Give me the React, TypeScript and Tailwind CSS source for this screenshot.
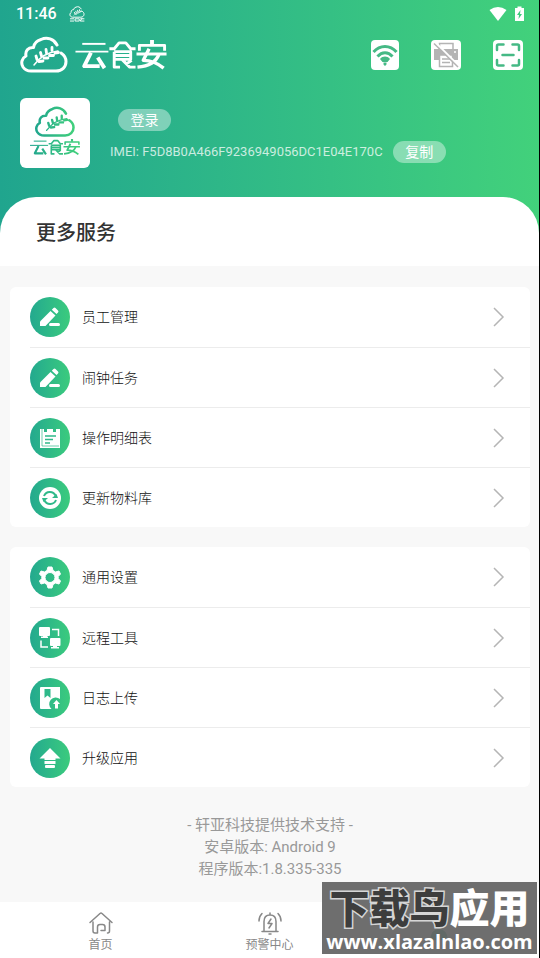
import type { ReactNode } from 'react';

const FONT = "font-[Roboto,'Noto_Sans_CJK_SC',sans-serif]";

function Cloud({ stroke, id }: { stroke: string; id?: string }) {
  return (
    <g fill="none" stroke={id ? `url(#${id})` : stroke} strokeLinecap="round" strokeLinejoin="round">
      <path
        strokeWidth="3"
        d="M37 9C34 3 27 0.500 21 3.500C16 5 14 8 13.500 11.500C8 11 5 15 6 20C2 22 0.500 27 3 31C5 34 8 35 11 35H36C42 35 46 31 46 25.500C46 22 44 19 41 17"
      />
      <path strokeWidth="1.500" d="M14 29C20 21 28 16 38 15" />
      <path
        strokeWidth="2.800"
        d="M17 23.500L16 20M21.500 20L20.500 16.500M26.500 17L26 13.500M32 14.500L32 11.500M19 25.500L23 25M24 22L28 22M29.500 19.500L33.500 19.500M35 17L38.500 16.500"
      />
    </g>
  );
}

function Mark() {
  return (
    <svg className="h-[38px] w-[48px]" viewBox="0 0 48 38" aria-hidden="true">
      <Cloud stroke="#fff" />
    </svg>
  );
}

function Wordmark({ gradient = false }: { gradient?: boolean }) {
  const color = gradient ? 'url(#word)' : '#fff';
  return (
    <svg className={gradient ? 'h-[17px] w-[52px]' : 'h-[31px] w-[92px]'} viewBox="0 0 94 32" role="img" aria-label="云食安">
      {gradient && (
        <defs>
          <linearGradient id="word" gradientUnits="userSpaceOnUse" x1="0" y1="0" x2="94" y2="0">
            <stop offset="0" stopColor="#20a58e" />
            <stop offset="1" stopColor="#42d17b" />
          </linearGradient>
        </defs>
      )}
      <g fill="none" stroke={color} strokeWidth="3" strokeLinejoin="round">
        <path strokeWidth="2" d="M7 4H31" />
        <path strokeWidth="2" d="M0 12H34" />
        <path strokeWidth="4" d="M16 13L9 27H25M23 18L30 29" />
        <path d="M35 9H40L45 3H52L57 9H62M40 12V28H46M40 12H57V20H40M40 16H57M48 20L56 28H62M58 21L52 25" />
        <path strokeWidth="4" d="M79 0V5" />
        <path d="M66 11V5.500H92V11M63 14.500H94" />
        <path strokeWidth="3.500" d="M76 9L70 21C79 21 85 24 91 29M86 15C83 23 75 27 64 28" />
      </g>
    </svg>
  );
}

function WifiIcon() {
  return (
    <svg viewBox="0 0 28 30" className="h-[30px] w-7" fill="none" stroke="#45b985" strokeWidth="3" aria-hidden="true">
      <path d="M2.500 12C9 4.500 19 4.500 25.500 12M6.500 16.500C11 11.500 17 11.500 21.500 16.500" />
      <path fill="#45b985" stroke="none" d="M9 19C12 15.800 16 15.800 19 19L16.500 22H11.500ZM12.500 22.500H15.500V24.500L14 26L12.500 24.500Z" />
    </svg>
  );
}

function PrinterIcon() {
  return (
    <svg viewBox="0 0 30 30" className="size-[30px]" aria-hidden="true">
      <path fill="none" stroke="#b4b4b4" strokeWidth="1.500" d="M8.500 9V3.500H22V9" />
      <path fill="#b4b4b4" d="M3 9H27V20H22V15H8V20H3Z" />
      <path fill="#fff" stroke="#b4b4b4" strokeWidth="1.500" d="M8.500 15H21.500V26.500H8.500Z" />
      <path stroke="#b4b4b4" strokeWidth="1.500" d="M11 19H19M11 22.500H19" />
      <path stroke="#fff" strokeWidth="2" d="M4.500 2.500L28.500 26.500" />
      <path stroke="#b4b4b4" strokeWidth="1.500" d="M3 3.500L27 27" />
      <circle cx="24" cy="12" r="1" fill="#fff" />
    </svg>
  );
}

function ScanIcon() {
  return (
    <svg viewBox="0 0 30 30" className="size-[30px]" fill="none" stroke="#45b985" strokeWidth="2.500" strokeLinecap="round" aria-hidden="true">
      <path d="M4 10V6Q4 4.500 5.500 4.500H10.500M19.500 4.500H24.500Q26 4.500 26 6V10M26 20V24Q26 25.500 24.500 25.500H19.500M10.500 25.500H5.500Q4 25.500 4 24V20M9.500 15H20.500" />
    </svg>
  );
}

function PencilIcon() {
  return (
    <>
      <path d="M10 29V24.500L20.500 14L25.500 18.500L15.500 29Z" />
      <path d="M21.800 12.700L23.500 11Q24.500 10 25.500 11L28 13.500Q29 14.500 28 15.500L26.500 17Z" />
      <rect x="19" y="26" width="11" height="3" rx="1.500" />
    </>
  );
}

function NotesIcon() {
  return (
    <>
      <path d="M10 11H14V14H17V11H23V14H26V11H30V30H10Z" />
      <path fill="none" stroke="#2fb98a" strokeWidth="0.700" d="M12 11V28H29" />
      <path stroke="#2fb98a" strokeWidth="1.500" d="M15 18H26M15 21.500H23M15 25H20" />
    </>
  );
}

function RefreshIcon() {
  return (
    <>
      <circle cx="20" cy="20" r="11" />
      <path fill="none" stroke="#2fb98a" strokeWidth="2" d="M14 18A6.300 6.300 0 0 1 25.500 17.500M26 22A6.300 6.300 0 0 1 14.500 22.500" />
      <path fill="#2fb98a" d="M22 20H28L26.500 16ZM18 20H12L13.500 24Z" />
    </>
  );
}

function GearIcon() {
  return (
    <path
      fillRule="evenodd"
      stroke="#fff"
      strokeLinejoin="round"
      d="M18 10H22L23 13.500L25.500 15L29 14L30.500 17L28.200 19.500V21.500L30.500 24L29 27L25.500 26L23 27.500L22 31H18L17 27.500L14.500 26L11 27L9.500 24L11.800 21.500V19.500L9.500 17L11 14L14.500 15L17 13.500ZM20 15.500A5 5 0 1 0 20 25.500A5 5 0 1 0 20 15.500Z"
    />
  );
}

function RemoteIcon() {
  return (
    <>
      <rect x="9" y="9" width="11" height="9" rx="1" />
      <path d="M13 17H17V18.500H18V20H11V18.500H13Z" />
      <rect x="20" y="20" width="10.500" height="8" rx="1" />
      <path d="M23 27.500H27V29H29V30.500H21V29H23Z" />
      <path fill="none" stroke="#fff" strokeWidth="1.500" d="M22 11.500H28.500V18M11 22.500V29H18" />
    </>
  );
}

function LogIcon() {
  return (
    <>
      <path d="M11 9H30V21A6 6 0 0 0 21.500 31H11Q10 31 10 30V10Q10 9 11 9Z" />
      <path fill="#2fb98a" d="M14.500 11H20.500V20L17.500 17.500L14.500 20Z" />
      <path d="M26.500 22L30 26H28V30.500H25V26H23Z" />
    </>
  );
}

function UpgradeIcon() {
  return (
    <>
      <path d="M20 10L30.500 20.500H25.500V22H14.500V20.500H9.500Z" />
      <rect x="14.500" y="23" width="11" height="3" />
      <rect x="15" y="27" width="10" height="3" rx="1" />
    </>
  );
}

function Row({ icon, label, first = false }: { icon: ReactNode; label: string; first?: boolean }) {
  return (
    <li className="pl-5">
      <button className={`flex h-[60px] w-full items-center pr-5 text-left ${first ? '' : 'border-t border-[#ececec]'}`}>
        <span className="flex size-10 shrink-0 items-center justify-center rounded-full bg-linear-to-r from-[#23a98e] to-[#3bcb7d]">
          <svg viewBox="0 0 40 40" className="size-10" fill="#fff" aria-hidden="true">
            {icon}
          </svg>
        </span>
        <span className="ml-3 flex-1 text-sm font-light text-[#111]">{label}</span>
        <svg viewBox="0 0 20 20" className="size-5" fill="none" stroke="#b5b5b5" strokeWidth="1.500" aria-hidden="true">
          <path d="M4 1L13 10L4 19" />
        </svg>
      </button>
    </li>
  );
}

function Tab({ label, children }: { label: string; children: ReactNode }) {
  return (
    <a href="#" className="flex flex-1 flex-col items-center gap-[1px] pt-2 text-[#888]">
      <svg viewBox="0 0 26 26" className="size-[26px]" fill="none" stroke="currentColor" strokeWidth="1.500" strokeLinecap="round" strokeLinejoin="round" aria-hidden="true">
        {children}
      </svg>
      <span className="text-xs leading-4">{label}</span>
    </a>
  );
}

export default function App() {
  return (
    <div className={`flex min-h-screen flex-col border-r border-black bg-[#f8f8f8] ${FONT}`}>
      <header className="bg-linear-to-r from-[#20a58e] to-[#42d17b] text-white">
        <div className="flex h-7 items-center justify-between pr-[15px] pl-4">
          <div className="flex items-center gap-3">
            <span className="text-base font-medium">11:46</span>
            <svg viewBox="0 0 48 50" className="h-4 w-4" aria-hidden="true">
              <Cloud stroke="#fff" />
              <path stroke="#fff" strokeWidth="3" fill="none" d="M2 40H15M2 47H15M18 40H31V47H18ZM34 40H47M40 38L34 47H47" />
            </svg>
          </div>
          <div className="flex items-center gap-2">
            <svg viewBox="0 0 18 16" className="h-4 w-[18px]" fill="#fff" aria-hidden="true">
              <path d="M0.500 4Q9 -2 17.500 4L9 15Z" />
            </svg>
            <svg viewBox="0 0 9 16" className="h-4 w-[9px]" fill="#fff" aria-hidden="true">
              <path d="M2.500 0.500H6.500V2H9V15H0V2H2.500Z" />
              <path fill="#3ecb7c" d="M5.500 4L2 9H4L3.500 13L7 8H5Z" />
            </svg>
          </div>
        </div>

        <div className="flex h-[54px] items-center justify-between pr-4 pl-5">
          <h1 className="flex items-center gap-[7px]">
            <Mark />
            <Wordmark />
          </h1>
          <div className="flex items-center gap-8">
            <button aria-label="WiFi" className="rounded bg-white">
              <WifiIcon />
            </button>
            <button aria-label="打印机" className="rounded bg-white">
              <PrinterIcon />
            </button>
            <button aria-label="扫一扫" className="rounded bg-white">
              <ScanIcon />
            </button>
          </div>
        </div>

        <div className="flex gap-5 px-5 pt-4 pb-[29px]">
          <div className="flex size-[70px] shrink-0 flex-col items-center gap-[1px] rounded-md bg-white pt-2">
            <svg viewBox="0 0 48 38" className="h-8 w-11" aria-hidden="true">
              <defs>
                <linearGradient id="cloud" gradientUnits="userSpaceOnUse" x1="0" y1="0" x2="48" y2="0">
                  <stop offset="0" stopColor="#20a58e" />
                  <stop offset="1" stopColor="#42d17b" />
                </linearGradient>
              </defs>
              <Cloud stroke="#20a58e" id="cloud" />
            </svg>
            <Wordmark gradient />
          </div>
          <div className="flex flex-col items-start gap-[10px] pt-[11px]">
            <button className="ml-2 h-[22px] w-[53px] rounded-full bg-white/40 text-sm leading-[22px]">登录</button>
            <div className="flex items-center gap-[10px]">
              <span className="text-[13px] whitespace-nowrap text-white/75">IMEI: F5D8B0A466F9236949056DC1E04E170C</span>
              <button className="h-[22px] w-[53px] rounded-full bg-white/40 text-sm leading-[22px]">复制</button>
            </div>
          </div>
        </div>

        <div className="rounded-t-[36px] bg-white px-9 pt-5 pb-[17px]">
          <h2 className="text-xl leading-8 font-medium text-[#333]">更多服务</h2>
        </div>
      </header>

      <main className="flex flex-1 flex-col gap-5 pt-[21px] pr-[9px] pl-[10px]">
        <ul className="rounded-md bg-white">
          <Row icon={<PencilIcon />} label="员工管理" first />
          <Row icon={<PencilIcon />} label="闹钟任务" />
          <Row icon={<NotesIcon />} label="操作明细表" />
          <Row icon={<RefreshIcon />} label="更新物料库" />
        </ul>
        <ul className="rounded-md bg-white">
          <Row icon={<GearIcon />} label="通用设置" first />
          <Row icon={<RemoteIcon />} label="远程工具" />
          <Row icon={<LogIcon />} label="日志上传" />
          <Row icon={<UpgradeIcon />} label="升级应用" />
        </ul>
        <div className="pt-[7px] text-center text-[15px] leading-[22px] text-[#999]">
          <p>- 轩亚科技提供技术支持 -</p>
          <p>安卓版本: Android 9</p>
          <p>程序版本:1.8.335-335</p>
        </div>
      </main>

      <nav className="relative flex h-14 bg-white px-4">
        <Tab label="首页">
          <path d="M5 12V21Q5 23 7 23H9M2 12.500L12 3.500Q13 2.700 14 3.500L24 12.500M21.500 12V21Q21.500 23 19.500 23M9.500 23V17Q9.500 14.500 12 14.500H14.500Q17 14.500 17 17V20.500H13" />
        </Tab>
        <Tab label="预警中心">
          <path d="M5 21.500H21M7 21V11.500Q7 5 13 5Q19 5 19 11.500V21M13 3V5M12 24H14M14 9L11 13.500H15L12 18M5 3.500Q2 6.500 2 11M21 3.500Q24 6.500 24 11" />
        </Tab>
        <a href="#" aria-label="我的" className="flex flex-1 justify-center pt-2 text-[#0f9d68]">
          <svg viewBox="0 0 26 40" className="h-10 w-[26px]" fill="currentColor" aria-hidden="true">
            <circle cx="13" cy="9" r="7" />
            <path d="M4 30Q5 19 13 19Q21 19 22 30Z" />
          </svg>
        </a>
        <aside className="absolute right-[2px] bottom-1 flex h-[72px] w-[215px] flex-col items-center justify-end bg-[#666]/95">
          <p className="text-[40px] leading-10 font-black whitespace-nowrap text-white">
            <span className="text-[#3d3d3d] [-webkit-text-stroke:3px_#d5d5d5] [paint-order:stroke_fill]">下载鸟</span>应用
          </p>
          <p className="font-['Open_Sans',sans-serif] text-xl leading-6 font-bold text-white">www.xlazalnlao.com</p>
        </aside>
      </nav>
    </div>
  );
}
